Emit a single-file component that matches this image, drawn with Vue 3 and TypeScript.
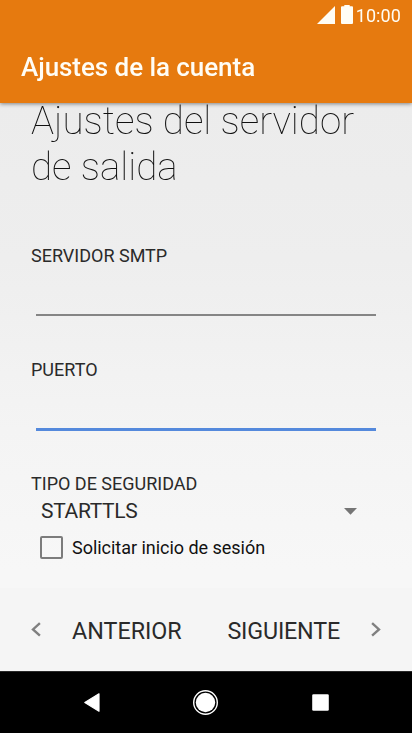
<script setup lang="ts">
import { ref } from 'vue'

interface Field {
  id: string
  label: string
}

const fields: Field[] = [
  { id: 'smtp', label: 'SERVIDOR SMTP' },
  { id: 'port', label: 'PUERTO' },
]
const focused = ref('port')
const requireLogin = ref(false)
</script>

<template>
  <div class="screen">
    <header class="app-bar">
      <div class="status">
        <svg class="signal" width="18" height="18" viewBox="0 0 18 18"><path d="M18 0V18H0Z" fill="#fffdf5" /></svg>
        <svg class="battery" width="12" height="19" viewBox="0 0 12 19"><path d="M3.3 0h5.4v1.3H11q1 0 1 1V18q0 1-1 1H1q-1 0-1-1V2.300q0-1 1-1h2.300z" fill="#fffdf5" /></svg>
        <span class="clock">10:00</span>
      </div>
      <div class="title"><span>Ajustes de la cuenta</span></div>
    </header>

    <main class="content">
      <h1>Ajustes del servidor<br />de salida</h1>
      <div v-for="f in fields" :key="f.id" class="field" @click="focused = f.id">
        <div class="label"><span :class="f.id">{{ f.label }}</span></div>
        <div class="input" :class="{ active: focused === f.id }"></div>
      </div>
      <div class="label"><span class="security">TIPO DE SEGURIDAD</span></div>
      <div class="select">
        <span>STARTTLS</span>
        <svg width="13" height="7" viewBox="0 0 13 7"><path d="M0 0H13L6.500 6.700Z" fill="#757575" /></svg>
      </div>
      <div class="check" @click="requireLogin = !requireLogin">
        <span class="box"></span>
        <span class="check-text">Solicitar inicio de sesión</span>
      </div>
    </main>

    <footer class="actions">
      <svg class="chev" width="10" height="15" viewBox="0 0 10 15"><path d="M8.900 1.100L2 7.400L8.900 13.700" /></svg>
      <span class="prev">ANTERIOR</span>
      <span class="next">SIGUIENTE</span>
      <svg class="chev" width="10" height="15" viewBox="0 0 10 15"><path d="M1.100 1.100L8 7.400L1.100 13.700" /></svg>
    </footer>

    <nav class="nav">
      <svg width="16" height="19" viewBox="0 0 16 19"><path d="M15 .8V18.200L.8 9.500Z" fill="#fff" stroke="#fff" stroke-width="1.200" stroke-linejoin="round" /></svg>
      <svg width="26" height="26" viewBox="0 0 26 26"><circle cx="12.500" cy="12.500" r="11.800" fill="none" stroke="#fff" stroke-width="1.400" /><circle cx="12.500" cy="12.500" r="9.700" fill="#fff" /></svg>
      <svg width="17" height="17" viewBox="0 0 17 17"><rect x=".2" y=".2" width="16.600" height="16.600" rx="1.300" fill="#fff" /></svg>
    </nav>
  </div>
</template>

<style>
body {
  margin: 0;
}
</style>

<style scoped>
.screen {
  width: 412px;
  height: 733px;
  display: flex;
  flex-direction: column;
  overflow: hidden;
  font-family: Roboto, sans-serif;
  color: #2a2a2a;
  background: linear-gradient(#ececec 103px, #eeeeee 260px, #f4f4f4 430px, #f7f7f7 570px);
}
.screen span {
  white-space: nowrap;
}
.app-bar {
  position: relative;
  z-index: 1;
  flex: none;
  height: 103px;
  background: #e67a0f;
  color: #fffdf5;
  box-shadow: 0 1px 4px rgba(0, 0, 0, 0.45);
}
.status {
  display: flex;
  justify-content: flex-end;
  height: 33px;
  padding-right: 11px;
  line-height: 32px;
  font-size: 18px;
}
.signal {
  margin: 6px 6px 0 0;
}
.battery {
  margin: 5px 3px 0 0;
}
.clock {
  letter-spacing: 0.1px;
}
.title {
  padding-left: 21px;
  font-size: 26px;
  font-weight: 500;
  letter-spacing: -0.06px;
  line-height: 69px;
}
.content {
  flex: none;
  height: 485px;
}
h1 {
  margin: -5.5px 0 55.5px 31px;
  font-size: 38.6px;
  font-weight: 100;
  line-height: 45.5px;
  white-space: nowrap;
  color: #111;
  will-change: transform;
}
.field {
  height: 114px;
}
.label {
  height: 24px;
  padding-left: 31px;
  font-size: 18px;
  line-height: 24px;
}
.input {
  height: 46px;
  margin: 0 36px;
  border-bottom: 2px solid #858585;
}
.input.active {
  border-bottom: 3px solid #5489dc;
}
.select {
  display: flex;
  align-items: center;
  justify-content: space-between;
  height: 30px;
  padding: 0 55px 0 41px;
  font-size: 21px;
  letter-spacing: -0.32px;
}
.check {
  display: flex;
  align-items: center;
  height: 42px;
  padding-left: 40px;
  font-size: 18px;
  letter-spacing: -0.03px;
  color: #111;
}
.box {
  box-sizing: border-box;
  width: 23px;
  height: 23px;
  margin-right: 9px;
  border: 2px solid #7c7c7c;
  border-radius: 2px;
}
.actions {
  display: flex;
  align-items: center;
  flex: none;
  height: 83px;
  padding: 0 31px;
  font-size: 23.3px;
  line-height: 30px;
  background: #f5f5f5;
}
.actions span {
  padding-top: 3px;
}
.chev {
  fill: none;
  stroke: #808080;
  stroke-width: 2.4;
}
.prev {
  margin-left: 31px;
}
.next {
  margin-left: auto;
  margin-right: 31px;
  letter-spacing: -0.18px;
}
.nav {
  display: flex;
  align-items: center;
  justify-content: space-between;
  box-sizing: border-box;
  height: 62px;
  padding: 0 83px 0 84px;
  border-top: 1px solid #292929;
  background: #000;
}
</style>
